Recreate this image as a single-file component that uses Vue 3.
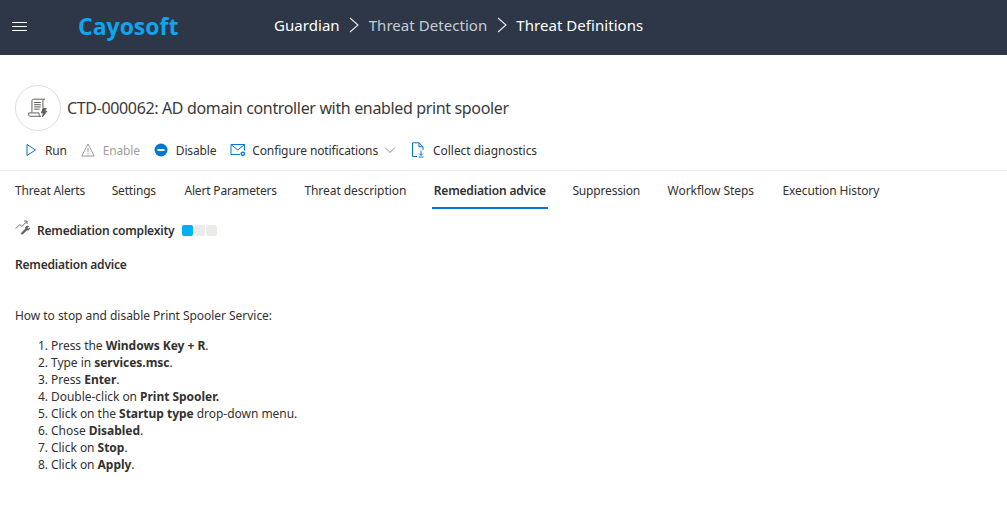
<template>
  <div class="page">
    <header class="topbar">
      <div class="menu"><span></span><span></span><span></span></div>
      <div class="logo">Cayosoft</div>
      <nav class="crumbs">
        <span class="c1">Guardian</span>
        <svg class="chev" width="12" height="16" viewBox="0 0 12 16"><path d="M2 1l8 7-8 7" fill="none" stroke="#e8eaed" stroke-width="1.1"/></svg>
        <span class="c2">Threat Detection</span>
        <svg class="chev" width="12" height="16" viewBox="0 0 12 16"><path d="M2 1l8 7-8 7" fill="none" stroke="#e8eaed" stroke-width="1.1"/></svg>
        <span class="c1">Threat Definitions</span>
      </nav>
    </header>

    <section class="head">
      <div class="avatar">
        <svg width="22" height="22" viewBox="0 0 20 20" fill="none" stroke="#5f5e5c" stroke-width=".9">
          <path d="M4.5 14V3.5c0-1 .6-1.500 1.500-1.500h10c-1 0-1.500.6-1.500 1.500V10"/>
          <path d="M1.500 14.500h9.500v1.500c0 .9.500 1.500 1.500 1.500H3c-1 0-1.500-.6-1.500-1.500z"/>
          <path d="M6.500 5h6M6.500 7h6M6.500 9h6M6.500 11h5"/>
          <path d="M14.500 10.500h3l-1.500 2.500h2l-4 5 1-3.500h-1.800z" fill="#5f5e5c"/>
        </svg>
      </div>
      <h1>CTD-000062: AD domain controller with enabled print spooler</h1>
    </section>

    <div class="toolbar">
      <button class="act run">
        <svg width="12" height="14" viewBox="0 0 12 14"><path d="M2 1.500l8.500 5.500L2 12.500z" fill="none" stroke="#0f6cbd" stroke-width="1"/></svg>
        <span>Run</span>
      </button>
      <button class="act enable">
        <svg width="14" height="14" viewBox="0 0 14 14" fill="none" stroke="#8f8e8c" stroke-width=".9"><path d="M7 1L.8 13h12.400z"/><path d="M7 5v4.500M7 10.500v1"/></svg>
        <span>Enable</span>
      </button>
      <button class="act disable">
        <svg width="14" height="14" viewBox="0 0 14 14"><circle cx="7" cy="7" r="6.500" fill="#0078d4"/><rect x="3.500" y="6" width="7" height="2" fill="#fff"/></svg>
        <span>Disable</span>
      </button>
      <button class="act notif">
        <svg width="16" height="14" viewBox="0 0 16 14" fill="none" stroke="#0078d4" stroke-width="1"><path d="M10 11.500H1V1.500h13.500v6"/><path d="M1 1.500l6.800 5.500 6.700-5.500"/><circle cx="12.800" cy="10.800" r="1.700" stroke-width="1.300"/></svg>
        <span>Configure notifications</span>
        <svg class="down" width="12" height="8" viewBox="0 0 12 8"><path d="M1 1.500l5 5 5-5" fill="none" stroke="#7b7a78" stroke-width=".9"/></svg>
      </button>
      <button class="act diag">
        <svg width="14" height="16" viewBox="0 0 14 16" fill="none" stroke="#0078d4" stroke-width="1"><path d="M6 14.500H1.500V.8h6.500l4 4V8"/><path d="M8 .8v4h4"/><path d="M10 8.500v4.500M8 11.500l2 2 2-2M7.500 15h5"/></svg>
        <span>Collect diagnostics</span>
      </button>
    </div>

    <nav class="tabs">
      <a v-for="t in tabs" :key="t" :class="['tab', { active: t === 'Remediation advice' }]">{{ t }}</a>
    </nav>

    <main class="content">
      <div class="complexity">
        <svg class="wrench" width="16" height="16" viewBox="0 0 16 16" fill="none" stroke="#5f5e5c" stroke-width=".9">
          <path d="M.8 8.500l4-4 2 2 5-5M9 1h3v3"/>
          <path d="M13.500 6.500c-1-.6-2.400-.2-2.800.9-.2.500-.1 1 0 1.400L6.500 13c-.6.600.5 1.700 1.100 1.100l4.200-4.200c1.300.5 2.700-.3 2.800-1.700l-1.500 1-1-1 1-1.500z" fill="#5f5e5c"/>
        </svg>
        <strong>Remediation complexity</strong>
        <div class="dots"><i class="on"></i><i></i><i></i></div>
      </div>
      <h2>Remediation advice</h2>
      <p class="intro">How to stop and disable Print Spooler Service:</p>
      <ol>
        <li>Press the <b>Windows Key + R</b>.</li>
        <li>Type in <b>services.msc</b>.</li>
        <li>Press <b>Enter</b>.</li>
        <li>Double-click on <b>Print Spooler.</b></li>
        <li>Click on the <b>Startup type</b> drop-down menu.</li>
        <li>Chose <b>Disabled</b>.</li>
        <li>Click on <b>Stop</b>.</li>
        <li>Click on <b>Apply</b>.</li>
      </ol>
    </main>
  </div>
</template>

<script setup>
const tabs = ['Threat Alerts', 'Settings', 'Alert Parameters', 'Threat description', 'Remediation advice', 'Suppression', 'Workflow Steps', 'Execution History']
</script>

<style>
html, body { margin: 0; background: #fff; }
</style>

<style scoped>
.page { width: 1007px; height: 515px; overflow: hidden; font-family: "Noto Sans", "Open Sans", sans-serif; font-size: 12px; color: #323130; letter-spacing: -0.2px; }
.topbar { height: 55px; background: #2d3748; display: flex; align-items: center; box-sizing: border-box; }
.menu { width: 15px; margin-left: 12px; margin-top: -3px; display: flex; flex-direction: column; gap: 3px; }
.menu span { height: 1px; background: #fff; }
.logo { margin-left: 51px; width: 196px; margin-top: -3px; font-size: 23px; font-weight: 700; color: #0ea5f0; letter-spacing: 0; font-family: "Open Sans", sans-serif; }
.crumbs { display: flex; align-items: center; gap: 8.5px; font-size: 15px; margin-top: -6px; letter-spacing: 0.05px; }
.c1 { color: #fff; }
.c2 { color: #c8cdd4; }
.head { display: flex; align-items: center; gap: 6px; margin: 30px 0 0 15px; height: 46px; }
.avatar { width: 44px; height: 44px; border: 1px solid #dcdcdc; border-radius: 50%; display: flex; align-items: center; justify-content: center; }
h1 { margin: 0; font-size: 16px; font-weight: 400; color: #3b3a39; letter-spacing: -0.35px; }
.toolbar { display: flex; align-items: center; padding-left: 25px; border-bottom: 1px solid #edebe9; padding-bottom: 1px; box-sizing: border-box; height: 40px; }
.act { display: flex; align-items: center; gap: 8px; border: 0; background: none; padding: 0; font: inherit; letter-spacing: -0.17px; color: #323130; margin-right: 14px; }
.enable { color: #a19f9d; }
.notif { gap: 6px; }
.notif span { letter-spacing: -0.12px; }
.diag span { letter-spacing: -0.05px; }
.diag { margin-left: 1px; }
.tabs { display: flex; padding-left: 13px; height: 38px; gap: 23.5px; letter-spacing: -0.17px; }
.tab { display: flex; align-items: center; padding: 2px 2px 0; height: 38px; box-sizing: border-box; color: #323130; border-bottom: 2px solid transparent; }
.tab:nth-child(2) { margin-left: -1px; }
.tab:nth-child(3) { margin-left: 1px; }
.tab:nth-child(4) { letter-spacing: -0.06px; }
.tab:nth-child(6) { margin-left: -1px; }
.tab:nth-child(7) { letter-spacing: -0.05px; }
.tab:nth-child(8) { letter-spacing: -0.1px; margin-left: 1px; }
.tab.active { font-weight: 600; border-bottom-color: #0078d4; }
.content { padding: 0 15px; }
.complexity { display: flex; align-items: center; margin-top: 9px; height: 24px; }
.wrench { margin-top: -4px; }
.complexity strong { font-weight: 600; margin-left: 6px; }
.dots { display: flex; gap: 1px; margin-left: 8px; }
.dots i { width: 11px; height: 11px; border-radius: 2px; background: #edebe9; }
.dots i.on { background: #00b0f5; }
h2 { margin: 14px 0 0; font-size: 12px; font-weight: 600; line-height: 17px; }
.intro { margin: 34px 0 0; line-height: 17px; letter-spacing: -0.04px; }
ol { margin: 13px 0 0; padding-left: 36px; letter-spacing: -0.03px; }
li { line-height: 17px; }
b { font-weight: 700; }
</style>
